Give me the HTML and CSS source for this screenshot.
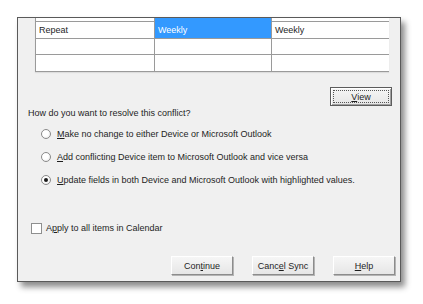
FILE: index.html
```html
<!DOCTYPE html>
<html lang="en">
<head>
    <meta charset="UTF-8">
    <title>Resolve Conflict</title>
    <link rel="stylesheet" href="styles.css">
</head>
<body>
    <div class="frame">
        <div class="dialog">
            <!-- Conflict grid, scrolled so the first row is cut off -->
            <div class="grid">
                <div class="cell strip"></div>
                <div class="cell strip sel"></div>
                <div class="cell strip"></div>

                <div class="cell">Repeat</div>
                <div class="cell sel">Weekly</div>
                <div class="cell">Weekly</div>

                <div class="cell short"></div>
                <div class="cell short"></div>
                <div class="cell short"></div>

                <div class="cell"></div>
                <div class="cell"></div>
                <div class="cell"></div>
            </div>

            <div class="view-row">
                <button class="btn default"><span class="focus"><u>V</u>iew</span></button>
            </div>

            <div class="question">How do you want to resolve this conflict?</div>

            <div class="options">
                <label class="option"><span class="radio"></span><span><u>M</u>ake no change to either Device or Microsoft Outlook</span></label>
                <label class="option"><span class="radio"></span><span><u>A</u>dd conflicting Device item to Microsoft Outlook and vice versa</span></label>
                <label class="option"><span class="radio on"></span><span><u>U</u>pdate fields in both Device and Microsoft Outlook with highlighted values.</span></label>
            </div>

            <label class="apply"><span class="check"></span><span>A<u>p</u>ply to all items in Calendar</span></label>

            <div class="actions">
                <button class="btn">Con<u>t</u>inue</button>
                <button class="btn">Canc<u>e</u>l Sync</button>
                <button class="btn"><u>H</u>elp</button>
            </div>
        </div>
    </div>
</body>
</html>
```

FILE: styles.css
```css
body {
    margin: 0;
    background: #ffffff;
    font-family: "Liberation Sans", Arial, sans-serif;
    font-size: 9px;
    color: #1e1e1e;
}
.frame {
    width: 418px;
    height: 298px;
    border-right: 2px solid #3c3c3c;
    border-bottom: 2px solid #3c3c3c;
    box-shadow: inset -6px -6px 8px -4px rgba(0, 0, 0, 0.12);
    overflow: hidden;
    padding-top: 17px;
    padding-left: 17px;
    box-sizing: content-box;
}
.dialog {
    width: 382px;
    height: 263px;
    background: #f0f0f0;
    border: 1px solid #5a5a5a;
    box-shadow: 4px 5px 6px rgba(0, 0, 0, 0.45);
    display: flex;
    flex-direction: column;
}

/* grid */
.grid {
    margin-left: 17px;
    width: 353px;
    display: grid;
    grid-template-columns: 119px 117px 117px;
    border-left: 1px solid #9a9a9a;
    background: #ffffff;
    box-shadow: 0 1px 1px rgba(0, 0, 0, 0.08);
}
.cell {
    height: 16px;
    line-height: 16px;
    padding-left: 3px;
    border-right: 1px solid #9a9a9a;
    border-bottom: 1px solid #9a9a9a;
    box-sizing: content-box;
    white-space: nowrap;
}
.cell:nth-child(3n) {
    border-right: none;
}
.cell.strip {
    height: 3px;
}
.cell.short {
    height: 15px;
}
.cell.sel {
    background: #3399ff;
    color: #ffffff;
}
.cell.strip.sel {
    border-bottom-color: #3399ff;
}

/* buttons */
.btn {
    font: inherit;
    color: #1e1e1e;
    height: 19px;
    width: 62px;
    padding: 0;
    background: linear-gradient(#f6f6f6, #e6e6e6);
    border: 1px solid;
    border-color: #ffffff #8c8c8c #8c8c8c #ffffff;
    box-shadow: 1px 1px 0 #b4b4b4;
}
.btn.default {
    border: 1px solid #5c5c5c;
    box-shadow: inset 1px 1px 0 #ffffff, inset -1px -1px 0 #a0a0a0;
    padding: 2px;
}
.focus {
    display: block;
    height: 100%;
    line-height: 12px;
    border: 1px dotted #555555;
    box-sizing: border-box;
}
.view-row {
    display: flex;
    justify-content: flex-end;
    margin-top: 15px;
    padding-right: 8px;
}
.question {
    margin-top: 2px;
    padding-left: 10px;
    line-height: 11px;
}

/* radios */
.options {
    display: flex;
    flex-direction: column;
    gap: 11px;
    margin-top: 9px;
    padding-left: 23px;
}
.option, .apply {
    display: flex;
    align-items: center;
    gap: 6px;
    line-height: 12px;
}
.radio {
    width: 8px;
    height: 8px;
    border-radius: 50%;
    border: 1px solid #8a8a8a;
    background: radial-gradient(circle at 40% 40%, #ffffff 40%, #e2e2e2);
    display: flex;
    align-items: center;
    justify-content: center;
}
.radio.on::after {
    content: "";
    width: 4px;
    height: 4px;
    border-radius: 50%;
    background: #1a1a1a;
}
.apply {
    margin-top: 36px;
    padding-left: 13px;
    gap: 4px;
}
.check {
    width: 9px;
    height: 9px;
    border: 1px solid #8e8f8f;
    background: #ffffff;
}
.actions {
    display: flex;
    justify-content: flex-end;
    gap: 19px;
    margin-top: auto;
    margin-bottom: 6px;
    padding-right: 5px;
}
```
